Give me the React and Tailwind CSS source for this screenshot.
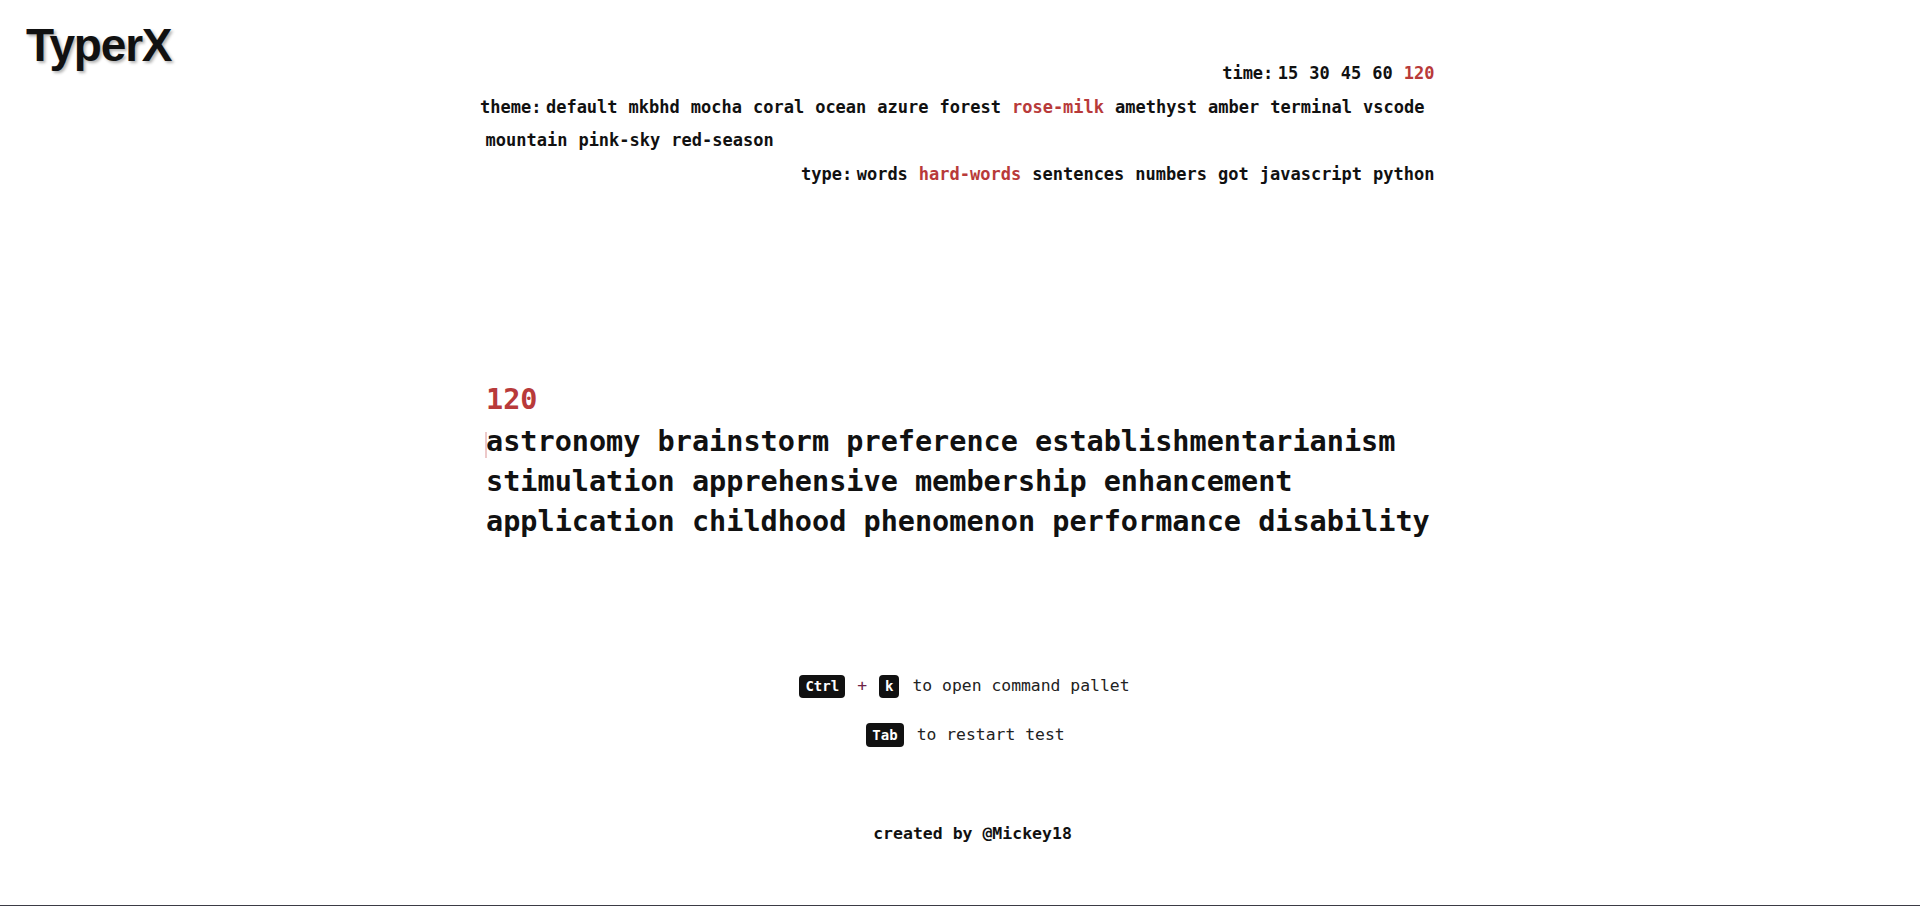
export default function App() {
  const times = ["15", "30", "45", "60", "120"];
  const themes = [
    "default", "mkbhd", "mocha", "coral", "ocean", "azure", "forest", "rose-milk",
    "amethyst", "amber", "terminal", "vscode", "mountain", "pink-sky", "red-season",
  ];
  const types = ["words", "hard-words", "sentences", "numbers", "got", "javascript", "python"];
  const lines = [
    "astronomy brainstorm preference establishmentarianism",
    "stimulation apprehensive membership enhancement",
    "application childhood phenomenon performance disability",
  ];

  return (
    <div className="h-[906px] bg-white border-b border-[#3b3b45] grid grid-cols-[1fr_960px_1fr] text-[#111] font-['DejaVu_Sans_Mono',monospace] overflow-hidden">
      <div className="pl-[26px] pt-[22px]">
        <div className="font-['Liberation_Sans',Arial,sans-serif] font-bold text-[46px] leading-none tracking-[-1.2px] text-[#111] [text-shadow:2px_2px_3px_rgba(0,0,0,0.3)]">
          TyperX
        </div>
      </div>

      <div className="flex flex-col">
        <div className="pt-[57px] text-[17px] font-bold leading-[33.5px]">
          <div className="flex justify-end">
            <span className="-mr-px">time:</span>
            {times.map((t) => (
              <span key={t} className={"mx-[5.5px] " + (t === "120" ? "text-[#b83a3a]" : "")}>{t}</span>
            ))}
          </div>
          <div className="flex flex-wrap">
            <span className="-mr-px">theme:</span>
            {themes.map((t) => (
              <span key={t} className={"mx-[5.5px] " + (t === "rose-milk" ? "text-[#b83a3a]" : "")}>{t}</span>
            ))}
          </div>
          <div className="flex justify-end">
            <span className="-mr-px">type:</span>
            {types.map((t) => (
              <span key={t} className={"mx-[5.5px] " + (t === "hard-words" ? "text-[#b83a3a]" : "")}>{t}</span>
            ))}
          </div>
        </div>

        <div className="mt-[189px] pl-[6px] text-[28.5px] leading-[40px] font-bold text-[#b83a3a]">120</div>

        <div className="relative mt-[2px] pl-[6px] text-[28.5px] leading-[40px] font-bold">
          <span className="absolute left-[5px] top-[10px] w-[2px] h-[26px] bg-[#edc9c9]"></span>
          {lines.map((l) => (
            <div key={l}>{l}</div>
          ))}
        </div>

        <div className="mt-[132px] pl-[9px] flex justify-center items-center h-[24px] text-[16.4px]">
          <span className="bg-[#111] text-white rounded-[4px] h-[23px] leading-[23px] px-[6px] text-[14px] font-bold">Ctrl</span>
          <span className="ml-[12px] text-[#6d2346]">+</span>
          <span className="ml-[12px] bg-[#111] text-white rounded-[4px] h-[23px] leading-[23px] px-[6px] text-[14px] font-bold">k</span>
          <span className="ml-[13px] text-[#222]">to open command pallet</span>
        </div>

        <div className="mt-[25px] pl-[11px] flex justify-center items-center h-[24px] text-[16.4px]">
          <span className="bg-[#111] text-white rounded-[4px] h-[24px] leading-[24px] px-[6px] text-[14px] font-bold">Tab</span>
          <span className="ml-[13px] text-[#222]">to restart test</span>
        </div>

        <div className="mt-[75px] pl-[25px] flex justify-center text-[16.5px] leading-[24px] font-bold">
          created by @Mickey18
        </div>
      </div>

      <div></div>
    </div>
  );
}
